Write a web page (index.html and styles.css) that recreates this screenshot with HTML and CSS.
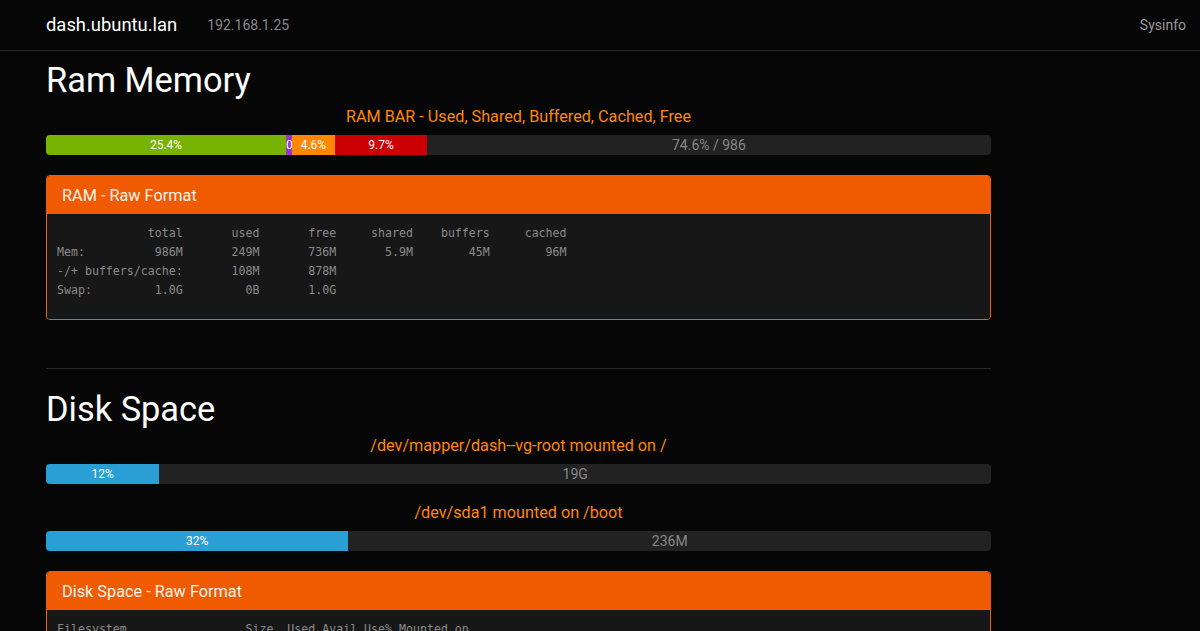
FILE: index.html
```html
<!DOCTYPE html>
<html lang="en">
<head>
<meta charset="utf-8">
<title>dash.ubuntu.lan - Sysinfo</title>
<link rel="stylesheet" href="styles.css">
</head>
<body>
<nav class="navbar">
  <div class="nav-left">
    <span class="brand">dash.ubuntu.lan</span>
    <span class="ip">192.168.1.25</span>
  </div>
  <span class="nav-link">Sysinfo</span>
</nav>
<main class="content">
  <section class="section">
    <h1 class="title">Ram Memory</h1>
    <div class="bar-label">RAM BAR - Used, Shared, Buffered, Cached, Free</div>
    <div class="bar">
      <div class="seg seg-green" style="width:25.4%">25.4%</div>
      <div class="seg seg-purple" style="width:0.6%">0.6%</div>
      <div class="seg seg-orange" style="width:4.6%">4.6%</div>
      <div class="seg seg-red" style="width:9.7%">9.7%</div>
      <div class="seg-rest">74.6% / 986</div>
    </div>
    <div class="panel">
      <div class="panel-head">RAM - Raw Format</div>
<pre class="raw">             total       used       free     shared    buffers     cached
Mem:          986M       249M       736M       5.9M        45M        96M
-/+ buffers/cache:       108M       878M
Swap:         1.0G         0B       1.0G</pre>
    </div>
  </section>
  <hr class="divider">
  <section class="section section-disk">
    <h1 class="title">Disk Space</h1>
    <div class="bar-label">/dev/mapper/dash--vg-root mounted on /</div>
    <div class="bar">
      <div class="seg seg-blue" style="width:12%">12%</div>
      <div class="seg-rest">19G</div>
    </div>
    <div class="bar-label bar-label-next">/dev/sda1 mounted on /boot</div>
    <div class="bar">
      <div class="seg seg-blue" style="width:32%">32%</div>
      <div class="seg-rest">236M</div>
    </div>
    <div class="panel">
      <div class="panel-head">Disk Space - Raw Format</div>
<pre class="raw">Filesystem                 Size  Used Avail Use% Mounted on
/dev/mapper/dash--vg-root   19G  2.1G   16G  12% /
udev                       484M  4.0K  484M   1% /dev
tmpfs                       99M  496K   98M   1% /run
/dev/sda1                  236M   71M  153M  32% /boot</pre>
    </div>
  </section>
</main>
</body>
</html>
```
FILE: styles.css
```css
html, body {
  margin: 0;
  padding: 0;
}
body {
  background: #060606;
  color: #888888;
  font-family: Roboto, "Liberation Sans", sans-serif;
  font-size: 14px;
  overflow: hidden;
}
.navbar {
  height: 50px;
  border-bottom: 1px solid #282828;
  display: flex;
  align-items: center;
  justify-content: space-between;
  padding: 0 14px 0 46px;
}
.nav-left {
  display: flex;
  align-items: center;
}
.brand {
  color: #ffffff;
  font-size: 18.4px;
  line-height: 20px;
}
.ip {
  color: #888888;
  font-size: 14px;
  margin-left: 30px;
  line-height: 20px;
}
.nav-link {
  color: #999999;
  font-size: 14px;
  line-height: 20px;
}
.content {
  width: 945px;
  margin-left: 46px;
}
.title {
  color: #ffffff;
  font-weight: 400;
  font-size: 34.4px;
  line-height: 40px;
  margin: 9px 0 0 0;
}
.section-disk .title {
  margin-top: 20px;
}
.bar-label {
  color: #ff8800;
  font-size: 16.2px;
  line-height: 20px;
  text-align: center;
  margin-top: 7px;
}
.section-disk .bar-label {
  margin-top: 7px;
}
.section-disk .bar-label-next {
  margin-top: 19px;
}
.bar {
  display: flex;
  height: 20px;
  margin-top: 8px;
  background: #222222;
  border-radius: 4px;
  overflow: hidden;
}
.seg {
  color: #ffffff;
  font-size: 12px;
  line-height: 20px;
  text-align: center;
  white-space: nowrap;
  overflow: hidden;
  text-overflow: clip;
}
.seg-green { background: #77b300; }
.seg-purple { background: #9933cc; }
.seg-orange { background: #ff8800; }
.seg-red { background: #cc0000; }
.seg-blue { background: #2a9fd6; }
.seg-rest {
  flex: 1;
  text-align: center;
  color: #888888;
  font-size: 14px;
  line-height: 21px;
}
.panel {
  margin-top: 20px;
  border: 1px solid #e6600f;
  border-radius: 4px;
  overflow: hidden;
  background: #171717;
}
.panel-head {
  background: #f05a00;
  color: #f4f4f4;
  font-size: 16.3px;
  line-height: 18px;
  padding: 11px 15px 9px;
}
.raw {
  margin: 0;
  padding: 10px 10px 19px;
  font-family: "DejaVu Sans Mono", "Liberation Mono", monospace;
  font-size: 11.6px;
  line-height: 19px;
  color: #8a8a8a;
  background: #171717;
}
.divider {
  border: 0;
  border-top: 1px solid #282828;
  margin: 48px 0 0 0;
  height: 0;
}
```
